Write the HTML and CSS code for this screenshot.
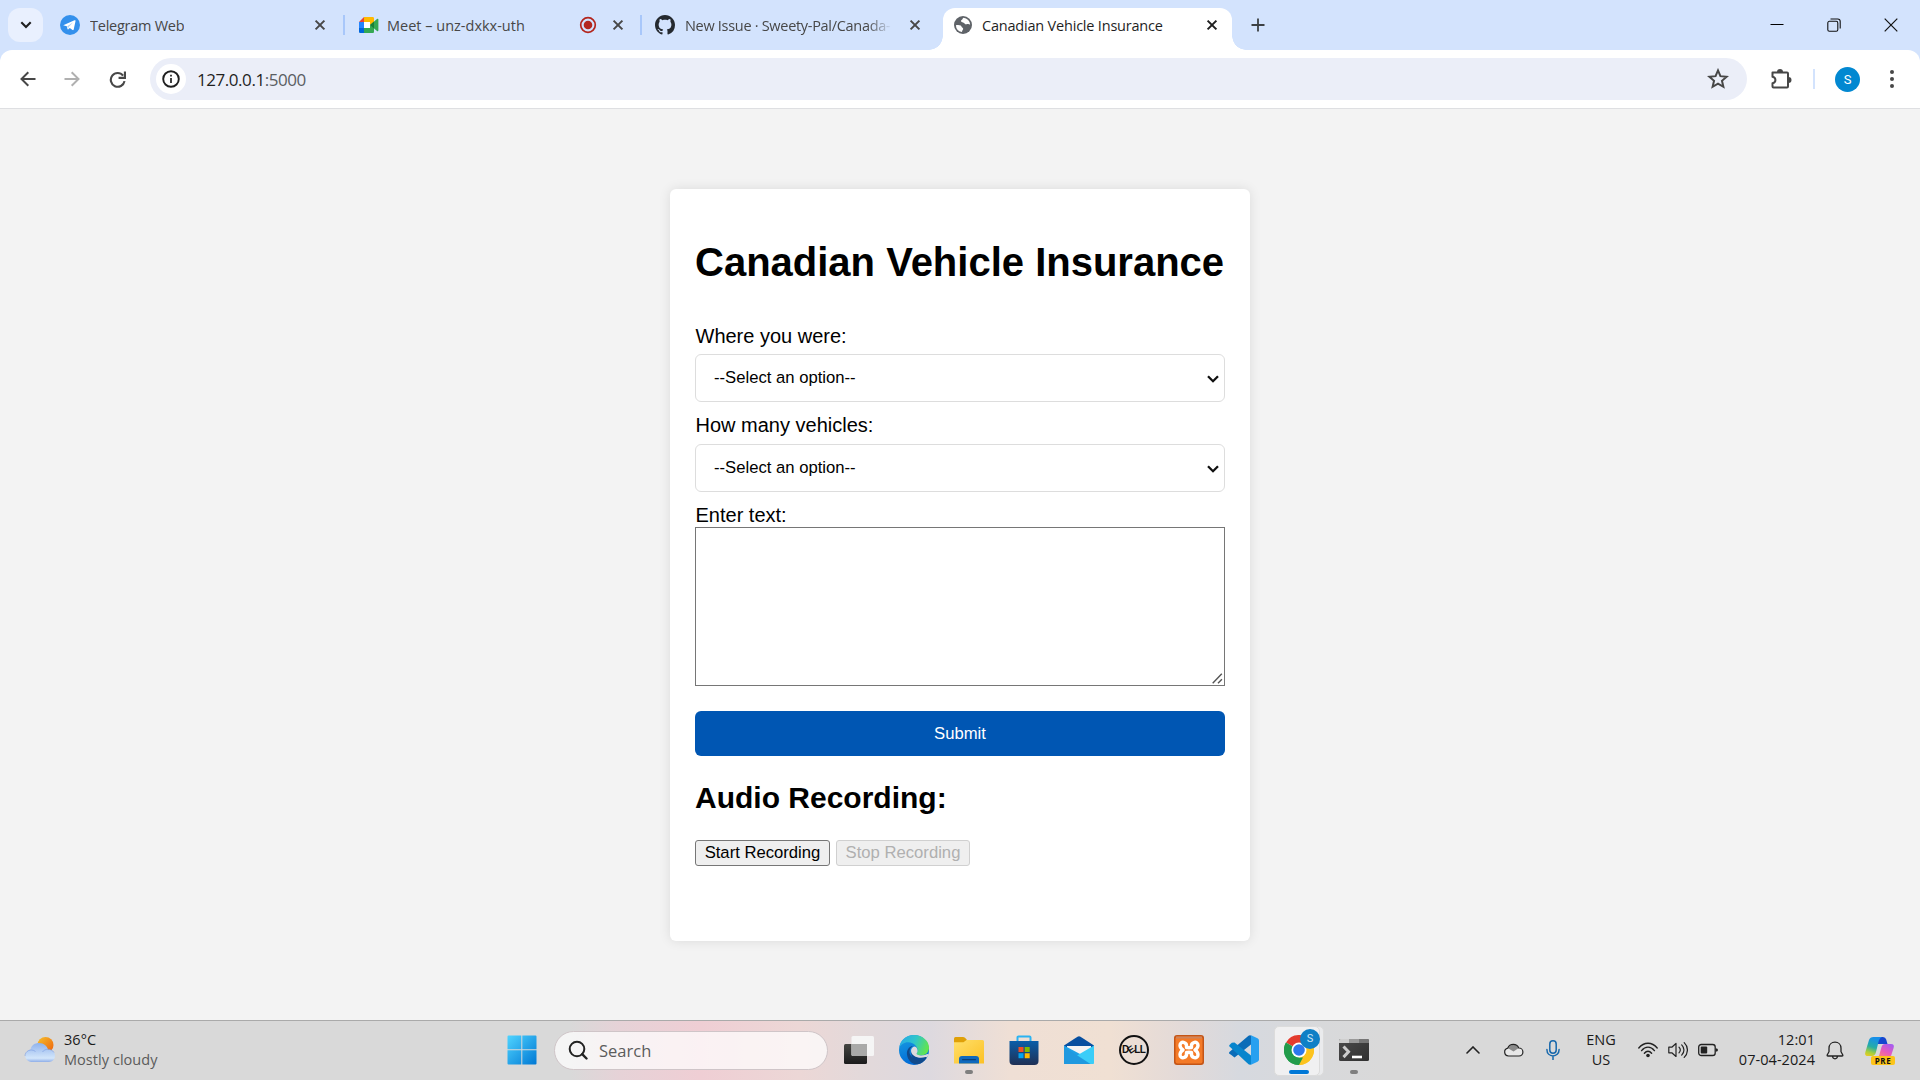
FILE: index.html
```html
<!DOCTYPE html>
<html lang="en">
<head>
<meta charset="utf-8">
<title>Canadian Vehicle Insurance</title>
<link rel="stylesheet" href="styles.css">
</head>
<body>
<svg class="defs" aria-hidden="true">
  <symbol id="x" viewBox="0 0 12 12"><path d="M1.6 1.6 10.4 10.4M10.4 1.6 1.6 10.4" fill="none" stroke="currentColor" stroke-width="2"/></symbol>
  <symbol id="caret" viewBox="0 0 12 8"><path d="M1 1.200 6 6.200l5-5" fill="none" stroke="#101010" stroke-width="2.300"/></symbol>
</svg>
<header class="tabstrip">
  <button class="tabsearch" aria-label="Search tabs"><svg width="12" height="8" viewBox="0 0 12 8"><path d="M1.3 1.3 6 6l4.700-4.700" fill="none" stroke="#1f1f1f" stroke-width="2.100"/></svg></button>
  <div class="tab tab-telegram">
    <svg class="fav" width="20" height="20" viewBox="0 0 20 20"><circle cx="10" cy="10" r="10" fill="#3390ec"/><path d="M3.800 9.900 14.500 5.300c.7-.3 1.200.1 1 .9l-1.800 8.300c-.2.700-.7.800-1.200.500l-2.700-2-1.400 1.300c-.4.400-.8.200-.9-.300l-.7-2.700-2.800-.8c-.6-.2-.6-.5-.2-.6z" fill="#fff"/><path d="m7.200 11.300 6-4-4.600 4.700-.4 2z" fill="#a9d0f5"/></svg>
    <span class="label t1">Telegram Web</span>
    <svg class="close" width="12" height="12"><use href="#x"/></svg>
  </div>
  <div class="tab tab-meet">
    <svg class="fav meet" width="20" height="16" viewBox="0 0 20 16"><path d="M0 5 5 0v5z" fill="#ea4335"/><path d="M5 0h8.500c1 0 1.500.5 1.500 1.500V6l-4 2V5H5z" fill="#ffba00"/><path d="M0 5h5v7H0z" fill="#2684fc"/><path d="M0 11h5v5H1.500C.5 16 0 15.500 0 14.500z" fill="#0066da"/><path d="M5 5h6v6H5z" fill="#fff"/><path d="M5 11h6V8l4 2v4.500c0 1-.5 1.500-1.500 1.500H5z" fill="#34a853"/><path d="m11 8 7-6c.6-.5 1.400-.2 1.400.7v10.600c0 .9-.8 1.200-1.400.7z" fill="#34a853"/><path d="m11 8 4-3.500v7z" fill="#188038"/></svg>
    <span class="label t2">Meet – unz-dxkx-uth</span>
    <svg class="rec" width="18" height="18" viewBox="0 0 18 18"><circle cx="9" cy="9" r="7.300" fill="none" stroke="#b3261e" stroke-width="1.700"/><circle cx="9" cy="9" r="4.300" fill="#b3261e"/></svg>
    <svg class="close" width="12" height="12"><use href="#x"/></svg>
  </div>
  <div class="tab tab-github">
    <svg class="fav" width="20" height="20" viewBox="0 0 16 16"><path fill="#24292f" d="M8 0C3.580 0 0 3.580 0 8c0 3.540 2.290 6.530 5.470 7.590.4.070.55-.17.55-.38 0-.19-.01-.82-.01-1.490-2.010.37-2.530-.49-2.690-.94-.09-.23-.48-.94-.82-1.130-.28-.15-.68-.52-.01-.53.63-.01 1.080.58 1.230.82.72 1.210 1.870.87 2.330.66.070-.52.280-.87.510-1.070-1.780-.2-3.640-.89-3.640-3.950 0-.87.310-1.590.82-2.150-.08-.2-.36-1.020.080-2.120 0 0 .67-.21 2.200.82.640-.18 1.320-.27 2-.27s1.360.09 2 .27c1.530-1.040 2.200-.82 2.200-.82.44 1.100.16 1.920.080 2.120.51.560.82 1.270.82 2.150 0 3.070-1.870 3.750-3.650 3.950.29.250.54.730.54 1.480 0 1.070-.01 1.930-.01 2.200 0 .21.150.46.550.38A8.010 8.010 0 0 0 16 8c0-4.420-3.580-8-8-8z"/></svg>
    <span class="label t3">New Issue · Sweety-Pal/Canada-</span>
    <svg class="close" width="12" height="12"><use href="#x"/></svg>
  </div>
  <div class="tab tab-active">
    <svg class="fav" width="18" height="18" viewBox="0 0 18 18"><circle cx="9" cy="9" r="9" fill="#5f6368"/><path d="M9.500 1.800c-1.200.6-.5 1.500-1.600 2-1.200.5-1 1.600-.3 2.200.8.600 2.300.4 3 1.500.6 1.100 1.500.9 2.700.6 1.200-.3 2.100.2 2.900.6A7.200 7.200 0 0 0 9.500 1.800zM1.900 9.300c1.600-.5 3.600-.4 4.800.3 1 .7.600 1.500 1.500 1.900 1.200.5 1.300 1.700.5 2.500-.7.700-.3 1.400-.9 2.100A7.200 7.200 0 0 1 1.900 9.300z" fill="#fff"/></svg>
    <span class="label t4">Canadian Vehicle Insurance</span>
    <svg class="close" width="12" height="12"><use href="#x"/></svg>
  </div>
  <svg class="newtab" width="14" height="14" viewBox="0 0 14 14"><path d="M7 .5v13M.5 7h13" stroke="#3c4043" stroke-width="1.800"/></svg>
  <div class="winbtns">
    <svg width="14" height="14" viewBox="0 0 14 14"><path d="M.5 6.500h13" stroke="#000"/></svg>
    <svg width="14" height="14" viewBox="0 0 14 14" fill="none" stroke="#111" stroke-width="1.100"><rect x=".8" y="3.300" width="10" height="10" rx="1.600"/><path d="M3.500 1h7.200C12.300 1 13.200 2 13.200 3.500v7"/></svg>
    <svg width="14" height="14" viewBox="0 0 14 14"><path d="m.7.700 12.600 12.600M13.300.7.700 13.300" stroke="#111" stroke-width="1.200"/></svg>
  </div>
</header>
<nav class="toolbar-wrap">
  <div class="toolbar">
    <svg class="nav-back" width="16" height="16" viewBox="0 0 16 16"><path d="M15.500 8H1.700M8.300 1.200 1.500 8l6.800 6.800" fill="none" stroke="#474747" stroke-width="2"/></svg>
    <svg class="nav-fwd" width="16" height="16" viewBox="0 0 16 16"><path d="M.5 8h13.800M7.700 1.200 14.500 8l-6.800 6.800" fill="none" stroke="#b0b0b0" stroke-width="2"/></svg>
    <svg class="nav-reload" width="17" height="17" viewBox="0 0 16 16"><path d="M13.300 4.300A6.500 6.500 0 1 0 14.600 9.500" fill="none" stroke="#474747" stroke-width="2"/><path d="M15 .5v6H9" fill="none" stroke="#474747" stroke-width="2"/></svg>
    <div class="omnibox">
      <span class="info"><svg width="18" height="18" viewBox="0 0 18 18"><circle cx="9" cy="9" r="7.800" fill="none" stroke="#1f1f1f" stroke-width="1.900"/><path d="M9 8v5M9 4.700v1.900" stroke="#1f1f1f" stroke-width="1.700"/></svg></span>
      <span class="url">127.0.0.1<span class="port">:5000</span></span>
      <svg class="star" width="22" height="22" viewBox="0 0 20 20"><path d="m10 2.200 2.200 5.200 5.700.5-4.300 3.700 1.300 5.500L10 14.200l-4.900 2.900 1.300-5.500-4.300-3.700 5.700-.5z" fill="none" stroke="#474747" stroke-width="1.800"/></svg>
    </div>
    <svg class="ext" width="22" height="22" viewBox="0 0 22 22"><path d="M2.500 4.500h14.500c.7 0 1 .3 1 1v13c0 .7-.3 1-1 1H3.500c-.7 0-1-.3-1-1v-3.300c3.900-.8 3.900-5.600 0-6.400z" fill="none" stroke="#474747" stroke-width="2" stroke-linejoin="round"/><path d="M7 4a3 3 0 0 1 6 0zM18.500 9a3 3 0 0 1 0 6z" fill="#474747"/></svg>
    <span class="divider"></span>
    <span class="avatar">S</span>
    <svg class="menu" width="4" height="18" viewBox="0 0 4 18"><g fill="#474747"><circle cx="2" cy="2" r="2"/><circle cx="2" cy="9" r="2"/><circle cx="2" cy="16" r="2"/></g></svg>
  </div>
</nav>
<main class="page">
  <section class="card">
    <h1>Canadian Vehicle Insurance</h1>
    <form class="form">
      <label for="where">Where you were:</label>
      <div class="select first"><select id="where"><option>--Select an option--</option></select><svg class="caret" width="12" height="8"><use href="#caret"/></svg></div>
      <label for="count">How many vehicles:</label>
      <div class="select"><select id="count"><option>--Select an option--</option></select><svg class="caret" width="12" height="8"><use href="#caret"/></svg></div>
      <label for="text">Enter text:</label>
      <div class="area"><textarea id="text"></textarea><svg class="grip" width="11" height="11" viewBox="0 0 11 11"><path d="M.7 10.300 9.800.7M6 10.300l3.900-4" stroke="#555" stroke-width="1.400"/></svg></div>
      <button class="submit" type="button">Submit</button>
    </form>
    <h2>Audio Recording:</h2>
    <div class="rec-row"><button class="btn start">Start Recording</button><button class="btn stop" disabled>Stop Recording</button></div>
  </section>
</main>
<footer class="taskbar">
  <div class="weather">
    <svg width="32" height="28" viewBox="0 0 32 28"><defs><linearGradient id="sun" x1="0" y1="0" x2="1" y2="1"><stop stop-color="#f5c02c"/><stop offset="1" stop-color="#ef5f0c"/></linearGradient><linearGradient id="cl" x1="0" y1="0" x2="0" y2="1"><stop stop-color="#8fb2ec"/><stop offset=".8" stop-color="#d3e6fb"/><stop offset="1" stop-color="#8faee8"/></linearGradient></defs><circle cx="21.500" cy="9" r="8" fill="url(#sun)"/><path d="M7 26a6.300 6.300 0 0 1-.5-12.500C7.500 9 11 7 15 7c5 0 8 3 9 6.500 4 0 7 2.500 7 6.300S28 26 25 26z" fill="url(#cl)"/><path d="M1 20c0-5 6-8 10.500-4.500M18.500 16c2-3.500 9-4 11.500.5" fill="none" stroke="#7798df" opacity=".55"/></svg>
    <div class="weather-text"><span>36°C</span><span class="muted">Mostly cloudy</span></div>
  </div>
  <div class="apps">
    <div class="app"><svg width="30" height="30" viewBox="0 0 30 30"><defs><linearGradient id="win" x1="0" y1="0" x2="1" y2="1" ><stop stop-color="#4fd4ff"/><stop offset="1" stop-color="#0078d4"/></linearGradient></defs><path d="M.5 1.500q0-1 1-1h12.800v13.800H.5zM15.300.5h13.200q1 0 1 1v12.800H15.300zM.5 15.300h13.800v14.200H1.500q-1 0-1-1zM15.300 15.300h14.200v13.200q0 1-1 1H15.300z" fill="url(#win)"/></svg></div>
    <div class="search"><svg width="20" height="20" viewBox="0 0 20 20"><circle cx="9" cy="9" r="7.300" fill="none" stroke="#222" stroke-width="2"/><path d="m14.200 14.200 4.300 4.300" stroke="#222" stroke-width="2.400" stroke-linecap="round"/></svg><span>Search</span></div>
    <div class="app"><svg width="30" height="30" viewBox="0 0 30 30"><defs><linearGradient id="tv" x1="0" y1="0" x2="0" y2="1"><stop stop-color="#454542"/><stop offset="1" stop-color="#1b1b1b"/></linearGradient></defs><rect y="9" width="23" height="20" rx="1.500" fill="url(#tv)"/><rect x="7.500" y="1" width="22.500" height="20" rx="1.500" fill="#f5f5f5"/><path d="M7.500 9H23v12H9q-1.500 0-1.500-1.500z" fill="#a9a9a8"/></svg></div>
    <div class="app"><svg width="30" height="30" viewBox="0 0 30 30"><defs><linearGradient id="e1" x1="0" y1=".2" x2="1" y2=".5"><stop stop-color="#28a8e8"/><stop offset=".5" stop-color="#2fc5cb"/><stop offset="1" stop-color="#62e54e"/></linearGradient><linearGradient id="e2" x1="0" y1="0" x2=".4" y2="1"><stop stop-color="#1ba0e2"/><stop offset="1" stop-color="#0069d6"/></linearGradient></defs><circle cx="15" cy="15" r="15" fill="url(#e2)"/><path d="M.2 13C1 5 7.500 0 15 0c8 0 15 5.500 15 12.500 0 5-3.500 8-8.500 8-3.500 0-4.500-1.500-3.700-2.500C19.500 15.500 18.500 11 14 8.500 8 5.500 2 8.500.2 13z" fill="url(#e1)"/><path d="M10.500 17c0-3 1.500-5 3.500-6-4.500.5-6.500 4.500-6 8.500.7 6 5.500 10.500 11 9.800 3.500-.8 6.500-3.300 8.500-6.300.3-.7-.2-1-.8-.7C19 26 10.500 23 10.500 17z" fill="#114a8b"/><path d="M12 16c0-2.500 1.500-4 3.500-4.500 2.500.5 4 4 2.500 6.300-1 1.200 0 2.500 3.500 2.700 3 .2 5.500-.9 6.500-1.500l1.800.3c-.5 1.300-1.300 2.400-2 3.200C20 26 12 22.500 12 16z" fill="#dddade"/><path d="M12 16c0 5 8 8.500 14.500 6 1-.4 1.300.3.800 1C20 28.500 11 24 12 16z" fill="#0d4a93"/></svg></div>
    <div class="app"><svg width="30" height="30" viewBox="0 0 30 30"><defs><linearGradient id="fo" x1="0" y1="0" x2="1" y2="1"><stop stop-color="#ffdf6a"/><stop offset="1" stop-color="#fcc125"/></linearGradient></defs><path d="M0 3.500Q0 2 1.500 2H9q1 0 2 .8L13 5v5H0z" fill="#dfa008"/><path d="M0 7.200h9.500L12.500 5H28.500Q30 5 30 6.500V28.500H0z" fill="url(#fo)"/><path d="M5 28.500V24q0-3 3-3h14q3 0 3 3v4.500z" fill="#0f69bd"/><rect x="8" y="24" width="14" height="1.300" rx=".6" fill="#093f78"/></svg><i class="dot"></i></div>
    <div class="app"><svg width="30" height="30" viewBox="0 0 30 30"><defs><linearGradient id="st" x1="0" y1="0" x2="0" y2="1"><stop stop-color="#0a5ea9"/><stop offset="1" stop-color="#1f3055"/></linearGradient></defs><path d="M8.500 7V2.500q0-1 1-1h11q1 0 1 1V7" fill="none" stroke="#2bb3f2" stroke-width="2"/><path d="M.5 6h29v20q0 4-4 4h-21q-4 0-4-4z" fill="url(#st)"/><path d="M9.500 12h5v5h-5z" fill="#f25022"/><path d="M15.700 12h5v5h-5z" fill="#7fba00"/><path d="M9.500 18.200h5v5h-5z" fill="#00a4ef"/><path d="M15.700 18.200h5v5h-5z" fill="#ffb900"/></svg></div>
    <div class="app"><svg width="30" height="30" viewBox="0 0 30 30"><path d="M0 10.500 13.500 1.700q1.500-.9 3 0L30 10.500V20H0z" fill="#074fa0"/><path d="M3 11h24v8H3z" fill="#f4f4f4"/><path d="M0 10.500 16 19 30 29H0z" fill="#1fa0e6"/><path d="M30 10.500 13 20.500 26 29h2.500q1.500 0 1.500-1.500z" fill="#3acdf8"/><path d="M13 20.300 26.500 29H0V12z" fill="#2196dc" opacity=".7"/></svg></div>
    <div class="app"><span class="dell">D<b>E</b>LL</span></div>
    <div class="app"><svg width="30" height="30" viewBox="0 0 30 30"><rect width="30" height="30" rx="3" fill="#c45516"/><rect x="1.500" y="1.500" width="27" height="27" rx="2" fill="#f47a27"/><path d="M2 1.500h26v2H2z" fill="#cf855c"/><path d="M12.500 12.500C13.500 6.500 6 5.500 6 10.300c0 2.700 1.500 3.700 3 4.700-1.500 1-3 2-3 4.700 0 4.800 7.500 3.800 6.500-2.200M17.500 12.500c-1-6 6.500-7 6.500-2.200 0 2.700-1.500 3.700-3 4.700 1.500 1 3 2 3 4.700 0 4.800-7.500 3.800-6.500-2.200M12.500 12q2.500 1.600 5 0M12.500 18q2.500-1.600 5 0" fill="none" stroke="#fff" stroke-width="3.400" stroke-linejoin="round" stroke-linecap="round"/></svg></div>
    <div class="app"><svg width="30" height="30" viewBox="0 0 30 30"><path d="M22 .5 22 9.500 5.500 22.500 2 19.700.4 18.700q-.7-.8 0-1.600L19.500.8Q20.500 0 22 .5z" fill="#0a6cb8"/><path d="M22 29.500V20.500L5.500 7.500 2.800 7.800.5 10q-.7.900 0 1.600L19.500 29.200q1 .8 2.500.3z" fill="#0785cd"/><path d="M22 .2 28.500 3.200Q30 4 30 5.500v19q0 1.500-1.500 2.300L22 29.800z" fill="#27a0f0"/></svg></div>
    <div class="app active">
      <svg width="30" height="30" viewBox="0 0 30 30"><circle cx="15" cy="15" r="15" fill="#fff"/><path d="M15 15 2 7.500A15 15 0 0 1 28 7.500z" fill="#e33b2e"/><path d="M15 15 28 7.500A15 15 0 0 1 15 30z" fill="#fcc31e"/><path d="M15 15v15A15 15 0 0 1 2 7.500z" fill="#229c4b"/><path d="M15 8h13.300A15 15 0 0 1 15 30l6-11z" fill="#fcc31e"/><path d="M2 7.500 9 19l6 3.500 4 0-4 7.500A15 15 0 0 1 2 7.500z" fill="#229c4b"/><circle cx="15" cy="15" r="7.500" fill="#fff"/><circle cx="15" cy="15" r="5.800" fill="#2d78ee"/></svg>
      <span class="badge">S</span><i class="dot long"></i>
    </div>
    <div class="app"><svg width="30" height="30" viewBox="0 0 30 30"><defs><linearGradient id="tm" x1="0" y1="0" x2="1" y2="1"><stop stop-color="#4b4b4b"/><stop offset="1" stop-color="#303030"/></linearGradient></defs><rect y="4" width="30" height="22" rx="1.500" fill="url(#tm)"/><path d="M1.500 4H10v4H0V5.500Q0 4 1.500 4z" fill="#cfcfcf"/><path d="M10 4h10v4H10z" fill="#999"/><path d="M20 4h8.500Q30 4 30 5.500V8H20z" fill="#767676"/><path d="m4.500 11.500 5 5.300-5 5.300" fill="none" stroke="#ccc" stroke-width="3"/><path d="M13 22h10" stroke="#fff" stroke-width="2.600"/></svg><i class="dot"></i></div>
  </div>
  <div class="tray">
    <div class="cell"><svg width="14" height="8" viewBox="0 0 14 8"><path d="M1 7 7 1l6 6" fill="none" stroke="#222" stroke-width="1.600" stroke-linecap="round"/></svg></div>
    <div class="cell"><svg width="21" height="14" viewBox="0 0 20 14"><path d="M5 13a4 4 0 0 1-.7-7.900A6 6 0 0 1 15.300 5 4 4 0 0 1 15.500 13z" fill="#e8e8e8"/><path d="M4.500 5C8 1 13 .5 15.300 5L10 8.500 5 5.500z" fill="#8a8a8a"/><path d="M5 13a4 4 0 0 1-.7-7.900A6 6 0 0 1 15.300 5 4 4 0 0 1 15.500 13z" fill="none" stroke="#222" stroke-width="1.200"/></svg></div>
    <div class="cell"><svg width="14" height="20" viewBox="0 0 14 20"><g fill="none" stroke="#1768ac" stroke-width="1.500"><rect x="3.800" y=".8" width="6.400" height="12.500" rx="3.200"/><path d="M.9 9.500c0 8.500 12.200 8.500 12.200 0M7 16v3.800" stroke-linecap="round"/></g></svg></div>
    <div class="lang"><span>ENG</span><span>US</span></div>
    <div class="status">
      <svg width="20" height="16" viewBox="0 0 20 16"><g fill="none" stroke="#222" stroke-width="1.400" stroke-linecap="round"><path d="M.8 6C6-.4 14-.4 19.200 6M3.600 8.600c3.700-4.600 9.100-4.600 12.800 0M6.400 11.200c2.200-2.600 5-2.600 7.200 0"/></g><circle cx="10" cy="13.500" r="1.800" fill="#222"/></svg>
      <svg width="20" height="18" viewBox="0 0 20 18"><g fill="none" stroke="#222" stroke-width="1.200" stroke-linecap="round" stroke-linejoin="round"><path d="M.8 6.200h3L8 2.500v13l-4.200-3.700h-3zM11 6.200c1.500 1.600 1.500 4 0 5.600M13.700 3.900c3 3 3 7.200 0 10.200M16.200 1.600c4.300 4.200 4.300 10.600 0 14.800"/></g></svg>
      <svg width="20" height="14" viewBox="0 0 20 14"><rect x=".7" y="1.500" width="16.500" height="11" rx="2.600" fill="none" stroke="#222" stroke-width="1.300"/><rect x="2.700" y="3.500" width="6.500" height="7" rx="1" fill="#222"/><path d="M17.700 5.200q2.300 0 2.300 1.800t-2.300 1.800z" fill="#222"/></svg>
    </div>
    <div class="clock"><span>12:01</span><span>07-04-2024</span></div>
    <svg class="bell" width="18" height="19" viewBox="0 0 18 19"><path d="M9 1.200c-3.500 0-6 2.500-6 6v3.500L1.200 14q-.3 1 .8 1h14q1.100 0 .8-1L15 10.700V7.200c0-3.500-2.500-6-6-6zM6.500 15.300c.3 3.300 4.700 3.300 5 0" fill="none" stroke="#222" stroke-width="1.300"/></svg>
    <div class="copilot"><svg width="30" height="28" viewBox="0 0 30 28"><defs><linearGradient id="c1" x1=".3" y1="0" x2="0" y2="1"><stop stop-color="#1790e8"/><stop offset=".45" stop-color="#26ada5"/><stop offset=".75" stop-color="#a9cf3c"/><stop offset="1" stop-color="#f5cc1c"/></linearGradient><linearGradient id="c2" x1=".8" y1="0" x2=".2" y2="1"><stop stop-color="#a65cf0"/><stop offset=".5" stop-color="#e85abb"/><stop offset="1" stop-color="#ff8b6a"/></linearGradient></defs><path d="M13 0h5q2.500 0 3.200 2.500L22.500 7H12z" fill="#1646cf"/><path d="M8.500 0H17q-2.500 1-3.300 4L11 15q-1 4-4 4H3Q-.8 19 .4 15L4 3q1-3 4.500-3z" fill="url(#c1)"/><path d="M20 7h6q3.800 0 2.600 4L26 19q-1 3-4 3H11q2.500-1 3.300-4l2.200-8q.8-3 3.500-3z" fill="url(#c2)"/></svg><span class="pre">PRE</span></div>
  </div>
</footer>
</body>
</html>
```
FILE: styles.css
```css
* { box-sizing: border-box; }
body {
  margin: 0;
  width: 1920px;
  height: 1080px;
  overflow: hidden;
  display: flex;
  flex-direction: column;
  font-family: "Open Sans", "Noto Sans", sans-serif;
  background: #f3f3f3;
}
svg { display: block; flex: none; }
button { cursor: default; }
.defs { position: absolute; width: 0; height: 0; }

/* tab strip */
.tabstrip {
  flex: none;
  height: 50px;
  background: #d3e3fd;
  display: flex;
  align-items: center;
  padding-left: 8px;
}
.tabsearch {
  width: 35px;
  height: 34px;
  border: 0;
  padding: 0;
  border-radius: 12px;
  background: #e9f0fe;
  display: flex;
  align-items: center;
  justify-content: center;
}
.tab {
  display: flex;
  align-items: center;
  font-size: 14.5px;
  color: #474747;
  height: 20px;
}
.label { white-space: nowrap; overflow: hidden; line-height: 22px; padding-top: 2px; margin-right: auto; }
.tab-telegram { width: 302px; padding: 0 17px 0 17px; border-right: 2px solid #a8c7fa; }
.tab-telegram .label { margin-left: 10px; }
.tab-meet { width: 297px; padding: 0 16px 0 14px; border-right: 2px solid #a8c7fa; }
.tab-meet .label { margin-left: 8px; }
.rec { margin-right: 15px; }
.tab-github { width: 301px; padding: 0 22px 0 13px; }
.tab-github .label {
  margin-left: 10px;
  width: 207px;
  -webkit-mask-image: linear-gradient(90deg, #000 88%, transparent);
  mask-image: linear-gradient(90deg, #000 88%, transparent);
}
.tab-active {
  position: relative;
  align-self: flex-end;
  width: 289px;
  height: 42px;
  padding: 0 14px 8px 11px;
  background: #fff;
  border-radius: 12px 12px 0 0;
  color: #1f1f1f;
}
.tab-active .label { margin-left: 10px; }
.tab-active::before, .tab-active::after {
  content: "";
  position: absolute;
  bottom: 0;
  width: 14px;
  height: 14px;
}
.tab-active::before { left: -14px; background: radial-gradient(circle at 0 0, transparent 13.5px, #fff 14px); }
.tab-active::after { right: -14px; background: radial-gradient(circle at 100% 0, transparent 13.5px, #fff 14px); }
.t1 { letter-spacing: -0.25px; }
.t2 { letter-spacing: 0; }
.t3 { letter-spacing: -0.3px; }
.t4 { letter-spacing: -0.2px; }
.newtab { margin-left: 19px; }
.winbtns { margin-left: auto; display: flex; gap: 43px; padding-right: 22px; }

/* toolbar */
.toolbar-wrap { flex: none; height: 59px; background: #d3e3fd; }
.toolbar {
  height: 59px;
  background: #fff;
  border-bottom: 1px solid #dedfe2;
  border-radius: 12px 12px 0 0;
  display: flex;
  align-items: center;
  padding-left: 20px;
}
.nav-fwd { margin-left: 28px; }
.nav-reload { margin: 0 24px 0 29px; }
.omnibox {
  width: 1597px;
  height: 42px;
  border-radius: 21px;
  background: #ebeef8;
  display: flex;
  align-items: center;
  padding: 0 18px 0 6px;
}
.info {
  width: 30px;
  height: 30px;
  border-radius: 50%;
  background: #fff;
  display: flex;
  align-items: center;
  justify-content: center;
}
.url { margin: 0 auto 0 11px; font-size: 17px; letter-spacing: -0.45px; color: #1f1f1f; }
.port { color: #5a5d62; }
.ext { margin-left: 23px; }
.divider { width: 2px; height: 20px; background: #d3e3fd; margin: 0 20px 0 21px; }
.avatar {
  width: 25px;
  height: 25px;
  border-radius: 50%;
  background: #0288d1;
  color: #fff;
  font: 13px/25px Roboto, sans-serif;
  text-align: center;
}
.menu { margin-left: 30px; }

/* page */
.page {
  flex: 1;
  display: flex;
  justify-content: center;
  align-items: flex-start;
  padding-top: 80px;
  font-family: "Liberation Sans", Arial, sans-serif;
  color: #000;
}
.card {
  width: 580px;
  height: 752px;
  background: #fff;
  border-radius: 6px;
  padding: 50px 25px 0;
  box-shadow: 0 0 12px rgba(0, 0, 0, 0.1);
}
h1 { margin: 0; font-size: 40px; line-height: 46px; white-space: nowrap; }
.form { display: flex; flex-direction: column; margin-top: 40px; font-size: 20px; }
label { line-height: 23px; padding-left: 0.5px; }
.select { position: relative; height: 48px; margin: 7px 0 12px; }
.select.first { margin-top: 6px; }
select {
  display: block;
  width: 100%;
  height: 48px;
  appearance: none;
  border: 1px solid #ddd;
  border-radius: 6px;
  background: #fff;
  padding: 0 0 2px 18px;
  font: 16.67px "Liberation Sans", Arial, sans-serif;
  color: #000;
}
.caret { position: absolute; right: 6px; top: 21px; pointer-events: none; }
.area { position: relative; height: 159px; }
textarea {
  display: block;
  width: 100%;
  height: 159px;
  margin: 0;
  border: 1px solid #767676;
  border-radius: 0;
  resize: none;
}
.grip { position: absolute; right: 2px; bottom: 2px; }
.submit {
  height: 45px;
  margin-top: 25px;
  border: 0;
  border-radius: 6px;
  background: #0056b3;
  color: #fff;
  font: 16.67px "Liberation Sans", Arial, sans-serif;
}
h2 { margin: 25px 0 0; font-size: 30px; line-height: 34px; }
.rec-row { display: flex; gap: 6px; margin-top: 25px; }
.btn {
  width: 135px;
  height: 26px;
  padding: 0;
  border: 1px solid #767676;
  border-radius: 3px;
  background: #efefef;
  color: #000;
  font: 16.67px "Liberation Sans", Arial, sans-serif;
  white-space: nowrap;
}
.stop { width: 134px; border-color: #d0d0d0; color: #b0b0b0; }

/* taskbar */
.taskbar {
  flex: none;
  height: 60px;
  border-top: 1px solid #aaa;
  display: flex;
  align-items: center;
  color: #1b1b1b;
  background: linear-gradient(90deg, #d9d9d9 0, #d9d9d9 570px, #e6d2d7 620px, #efced4 700px, #ecd7d6 800px, #e3d9da 860px, #ddd9df 930px, #efdfd5 1010px, #f0e0d3 1110px, #e3dad8 1180px, #d6d9df 1240px, #d8d9db 1320px, #d9d9d9 1390px);
}
.weather { width: 494px; padding: 0 0 1px 24px; display: flex; align-items: center; gap: 8px; }
.weather-text, .lang, .clock { display: flex; flex-direction: column; font-size: 14.5px; line-height: 20px; padding-bottom: 1px; }
.weather-text { letter-spacing: 0.05px; }
.muted { color: #5b5b5b; }
.apps { display: flex; align-items: center; padding-bottom: 1px; }
.app {
  position: relative;
  width: 55px;
  height: 48px;
  display: flex;
  align-items: center;
  justify-content: center;
}
.search {
  width: 274px;
  height: 39px;
  margin: 0 3px 0 5px;
  border: 1px solid #cfc5c8;
  border-radius: 20px;
  background: rgba(255, 255, 255, 0.72);
  display: flex;
  align-items: center;
  gap: 11px;
  padding-left: 13px;
  font-size: 16.5px;
  color: #5c5c5c;
}
.dot { position: absolute; left: 24px; bottom: 0; width: 8px; height: 4px; border-radius: 2px; background: #7f7f7f; }
.dot.long { left: 18px; width: 20px; background: #0078d7; }
.dell {
  width: 30px;
  height: 30px;
  border: 2px solid #111;
  border-radius: 50%;
  font: bold 10px/26px "Liberation Sans", Arial, sans-serif;
  letter-spacing: -0.8px;
  color: #111;
  display: flex;
  justify-content: center;
}
.dell b { transform: rotate(-35deg); }
.active::before, .active::after {
  content: "";
  position: absolute;
  top: 0;
  left: 3px;
  width: 48px;
  height: 48px;
  border: 1px solid #dcdcdc;
  border-radius: 5px;
  background: #eaebed;
}
.active::after { width: 44px; background: #f0f0f1; }
.active svg, .active .dot { z-index: 1; }
.active svg { position: relative; }
.badge {
  position: absolute;
  z-index: 2;
  left: 29px;
  top: 3px;
  width: 20px;
  height: 20px;
  border-radius: 50%;
  background: #0f80c6;
  color: #cfe6f6;
  font: 11px/20px Roboto, sans-serif;
  text-align: center;
}
.tray { margin-left: auto; display: flex; align-items: center; padding: 0 14px 1px 0; }
.cell { width: 40px; display: flex; justify-content: center; }
.lang { width: 56px; text-align: center; }
.status { display: flex; align-items: center; gap: 10px; margin-left: 9px; }
.clock { width: 97px; text-align: right; letter-spacing: 0.05px; }
.bell { margin-left: 11px; }
.copilot { position: relative; width: 30px; margin: 2px 11px 0 21px; }
.pre {
  position: absolute;
  left: 6px;
  top: 19px;
  width: 24px;
  height: 9px;
  border-radius: 2px;
  background: #fcc419;
  color: #111;
  font: bold 8px/9px "Open Sans", sans-serif;
  letter-spacing: 0.5px;
  text-align: center;
}
```
